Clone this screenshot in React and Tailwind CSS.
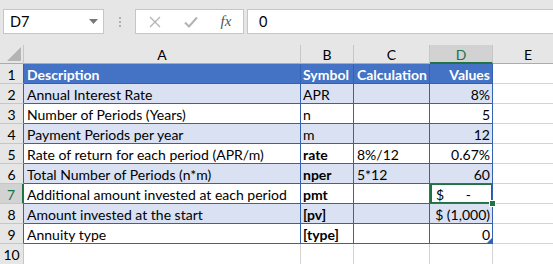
import React from "react";

const F = { fontFamily: "Lato, 'Open Sans', sans-serif" };

const rows = [
  { n: 1, a: "Description", b: "Symbol", c: "Calculation", d: "Values", header: true },
  { n: 2, a: "Annual Interest Rate", b: "APR", c: "", d: "8%" },
  { n: 3, a: "Number of Periods (Years)", b: "n", c: "", d: "5" },
  { n: 4, a: "Payment Periods per year", b: "m", c: "", d: "12" },
  { n: 5, a: "Rate of return for each period (APR/m)", b: "rate", bold: true, c: "8%/12", d: "0.67%" },
  { n: 6, a: "Total Number of Periods (n*m)", b: "nper", bold: true, c: "5*12", d: "60" },
  { n: 7, a: "Additional amount invested at each period", b: "pmt", bold: true, c: "", d: "dash" },
  { n: 8, a: "Amount invested at the start", b: "[pv]", bold: true, c: "", d: "$ (1,000)" },
  { n: 9, a: "Annuity type", b: "[type]", bold: true, c: "", d: "0" },
];

function ColHead({ label, w, selected, last }) {
  return (
    <div
      className={
        "flex items-center justify-center h-full shrink-0 " +
        (selected
          ? "bg-[#d2d2d2] text-[#217346] border-b-2 border-b-[#217346]"
          : "border-b border-b-[#ababab] text-black") +
        (last ? "" : " border-r border-r-[#c6c6c6]")
      }
      style={{ width: w }}
    >
      <span className="text-[14px] leading-none pt-[2px]">{label}</span>
    </div>
  );
}

export default function App() {
  return (
    <div className="w-[553px] h-[264px] overflow-hidden bg-white text-black select-none" style={F}>
      {/* Formula bar */}
      <div className="h-[45px] bg-[#e6e6e6] flex items-start pt-[9px]">
        <div className="ml-[3px] w-[101px] h-[25px] bg-white border border-[#c6c6c6] flex items-center justify-between pl-[6px] pr-[5px]">
          <span className="text-[14.5px]">D7</span>
          <svg width="9" height="5" viewBox="0 0 9 5"><path d="M0 0 L9 0 L4.5 5 Z" fill="#777" /></svg>
        </div>
        <div className="w-[31px] h-[25px] flex flex-col items-center justify-center gap-[2px]">
          <div className="w-[2px] h-[2px] bg-[#b0b0b0]" />
          <div className="w-[2px] h-[2px] bg-[#b0b0b0]" />
          <div className="w-[2px] h-[2px] bg-[#b0b0b0]" />
        </div>
        <div className="w-[109px] h-[25px] bg-white border border-[#c6c6c6] flex items-center">
          <div className="w-[36px] flex justify-center ml-[1px]">
            <svg width="12" height="12" viewBox="0 0 12 12"><path d="M1 1 L11 11 M11 1 L1 11" stroke="#b3b3b3" strokeWidth="1.3" /></svg>
          </div>
          <div className="w-[36px] flex justify-center">
            <svg width="14" height="12" viewBox="0 0 14 12"><path d="M1 6.5 L5 10.5 L13 1.5" stroke="#b3b3b3" strokeWidth="2" fill="none" /></svg>
          </div>
          <div className="w-[34px] flex justify-center">
            <span className="italic text-[15px] text-[#555] leading-none" style={{ fontFamily: "'Liberation Serif', serif" }}>fx</span>
          </div>
        </div>
        <div className="ml-[3px] flex-1 h-[25px] bg-white border border-[#c6c6c6] border-r-0 flex items-center pl-[11px]">
          <span className="text-[14.5px]">0</span>
        </div>
      </div>

      {/* Column headers */}
      <div className="h-[19px] bg-[#e6e6e6] flex">
        <div className="w-[24px] h-full shrink-0 border-r border-r-[#c6c6c6] border-b border-b-[#ababab] relative">
          <svg className="absolute right-[2px] bottom-[2px]" width="14" height="14" viewBox="0 0 14 14"><path d="M14 0 L14 14 L0 14 Z" fill="#b4b4b4" /></svg>
        </div>
        <ColHead label="A" w={277} />
        <ColHead label="B" w={53} />
        <ColHead label="C" w={76} />
        <ColHead label="D" w={63} selected />
        <ColHead label="E" w={70} last />
      </div>

      {/* Rows */}
      {rows.map((r) => {
        const bg = r.header ? "bg-[#4472c4]" : r.n % 2 === 0 ? "bg-[#d9e1f2]" : "bg-white";
        const txt = r.header ? "text-white font-bold" : "text-black";
        const cell = "h-full shrink-0 border-r border-b border-[#3461b0] flex items-center overflow-hidden whitespace-nowrap text-[14px] leading-none " + bg + " " + txt;
        const sel = r.n === 7;
        return (
          <div key={r.n} className="h-[20px] flex">
            <div
              className={
                "w-[24px] h-full shrink-0 flex items-center justify-center text-[14px] leading-none border-b " +
                (sel
                  ? "bg-[#d2d2d2] text-[#217346] border-b-[#c6c6c6] border-r-2 border-r-[#217346]"
                  : "bg-[#e6e6e6] border-b-[#c6c6c6] border-r border-r-[#3461b0]")
              }
            >
              <span className="pt-[2px]">{r.n}</span>
            </div>
            <div className={cell + " w-[277px] pl-[3px]"}>
              <span className="pt-[2px]">{r.a}</span>
            </div>
            <div className={cell + " w-[53px] pl-[2px] " + (r.bold ? "font-bold" : "")}>
              <span className="pt-[2px]">{r.b}</span>
            </div>
            <div className={cell + " w-[76px] pl-[3px]"}>
              <span className="pt-[2px]">{r.c}</span>
            </div>
            <div className={cell + " w-[63px] relative " + (r.d === "dash" ? "justify-between pl-[6px] pr-[21px]" : "justify-end pr-[2px]")}>
              {r.d === "dash" ? (
                <>
                  <span className="pt-[2px]">$</span>
                  <span className="pt-[2px]">-</span>
                </>
              ) : (
                <span className="pt-[2px]">{r.d}</span>
              )}
              {sel && (
                <div className="absolute left-0 top-[-1px] w-[63px] h-[21px] border-2 border-[#217346] pointer-events-none" />
              )}
              {r.n === 9 && (
                <svg className="absolute right-0 bottom-0" width="5" height="5" viewBox="0 0 5 5"><path d="M5 0 L5 5 L0 5 Z" fill="#3461b0" /></svg>
              )}
            </div>
            <div className="flex-1 h-full border-b border-b-[#d4d4d4] bg-white relative">
              {sel && <div className="absolute left-[-4px] bottom-[-4px] w-[7px] h-[7px] bg-[#217346] border border-white z-10" />}
            </div>
          </div>
        );
      })}
      {/* Row 10 */}
      <div className="h-[20px] flex">
        <div className="w-[24px] h-full shrink-0 flex items-center justify-center text-[14px] leading-none bg-[#e6e6e6] border-r border-r-[#c6c6c6]">
          <span className="pt-[2px]">10</span>
        </div>
        <div className="w-[277px] h-full border-r border-[#d4d4d4]" />
        <div className="w-[53px] h-full border-r border-[#d4d4d4]" />
        <div className="w-[76px] h-full border-r border-[#d4d4d4]" />
        <div className="w-[63px] h-full border-r border-[#d4d4d4]" />
        <div className="flex-1 h-full" />
      </div>
    </div>
  );
}
